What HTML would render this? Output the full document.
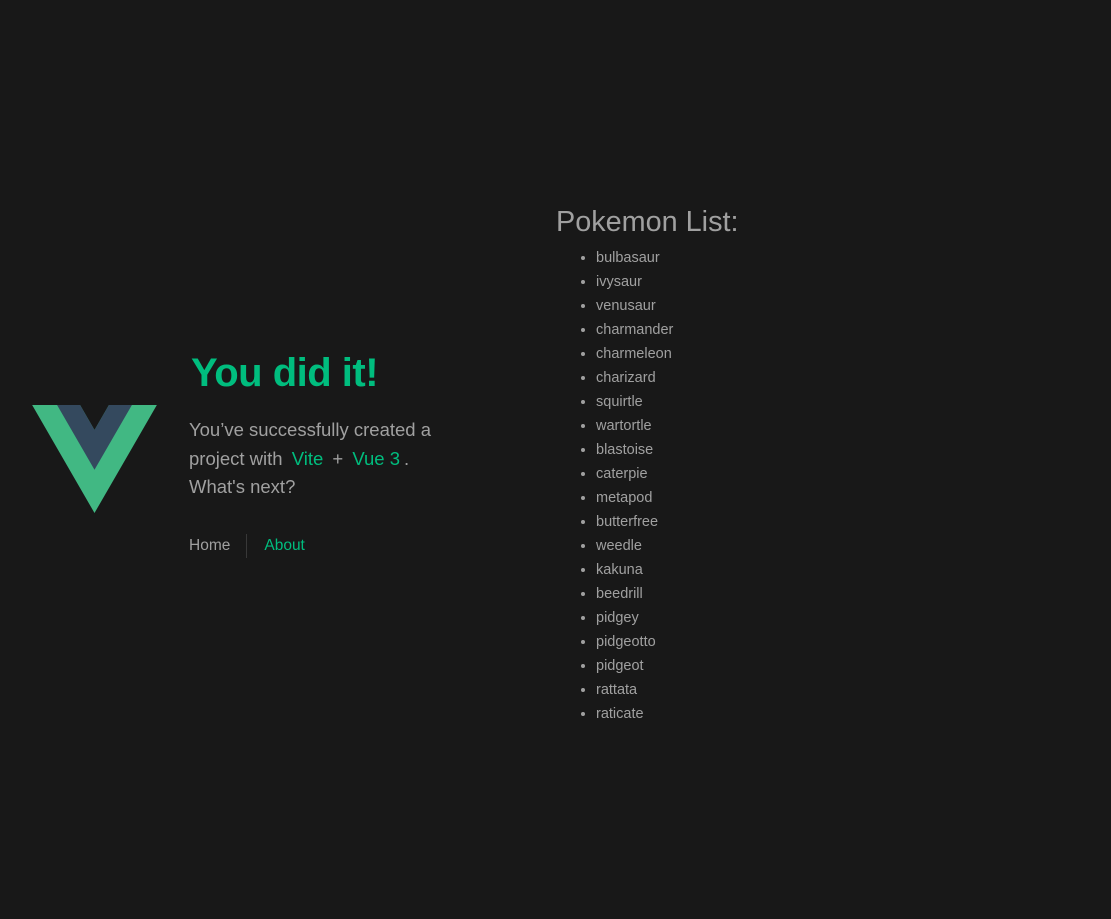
<!DOCTYPE html>
<html><head><style>
body{margin:0;width:1111px;height:919px;background:#181818;font-family:"Liberation Sans",sans-serif;color:#a0a0a0;position:relative;overflow:hidden}
.a{position:absolute;white-space:nowrap}
h1{margin:0;font-weight:bold;color:#00bd7e;font-size:40px;position:absolute;left:191px;top:348px;line-height:50px;letter-spacing:-0.5px}
.p{left:189px;top:416px;font-size:18.5px;line-height:28.7px}
.g{color:#00bd7e;padding:0 4px}
nav{position:absolute;left:189px;top:534px;font-size:15.5px;line-height:24px}
nav span{display:inline-block;padding:0 17px}
nav span:first-child{padding-left:0;padding-right:16px;border-right:1px solid #383838}
h2{margin:0;font-weight:400;font-size:28.8px;position:absolute;left:556px;top:205px;line-height:34px;color:#a0a0a0}
ul{position:absolute;left:556px;top:246px;margin:0;padding-left:40px;font-size:14.5px;line-height:24px}
</style></head><body>
<svg class="a" style="left:32px;top:405px" width="125" height="108" viewBox="0 0 261.76 226.69"><path d="M161.096.001l-30.225 52.351L100.647.001H-.005l130.877 226.688L261.749.001z" fill="#41b883"/><path d="M161.096.001l-30.225 52.351L100.647.001H52.346l78.526 136.01L209.398.001z" fill="#34495e"/></svg>
<h1>You did it!</h1>
<div class="a p">You’ve successfully created a<br>project with <span class="g">Vite</span> + <span class="g">Vue 3</span>.<br>What's next?</div>
<nav><span>Home</span><span style="color:#00bd7e">About</span></nav>
<h2>Pokemon List:</h2>
<ul><li>bulbasaur</li><li>ivysaur</li><li>venusaur</li><li>charmander</li><li>charmeleon</li><li>charizard</li><li>squirtle</li><li>wartortle</li><li>blastoise</li><li>caterpie</li><li>metapod</li><li>butterfree</li><li>weedle</li><li>kakuna</li><li>beedrill</li><li>pidgey</li><li>pidgeotto</li><li>pidgeot</li><li>rattata</li><li>raticate</li></ul>
</body></html>
